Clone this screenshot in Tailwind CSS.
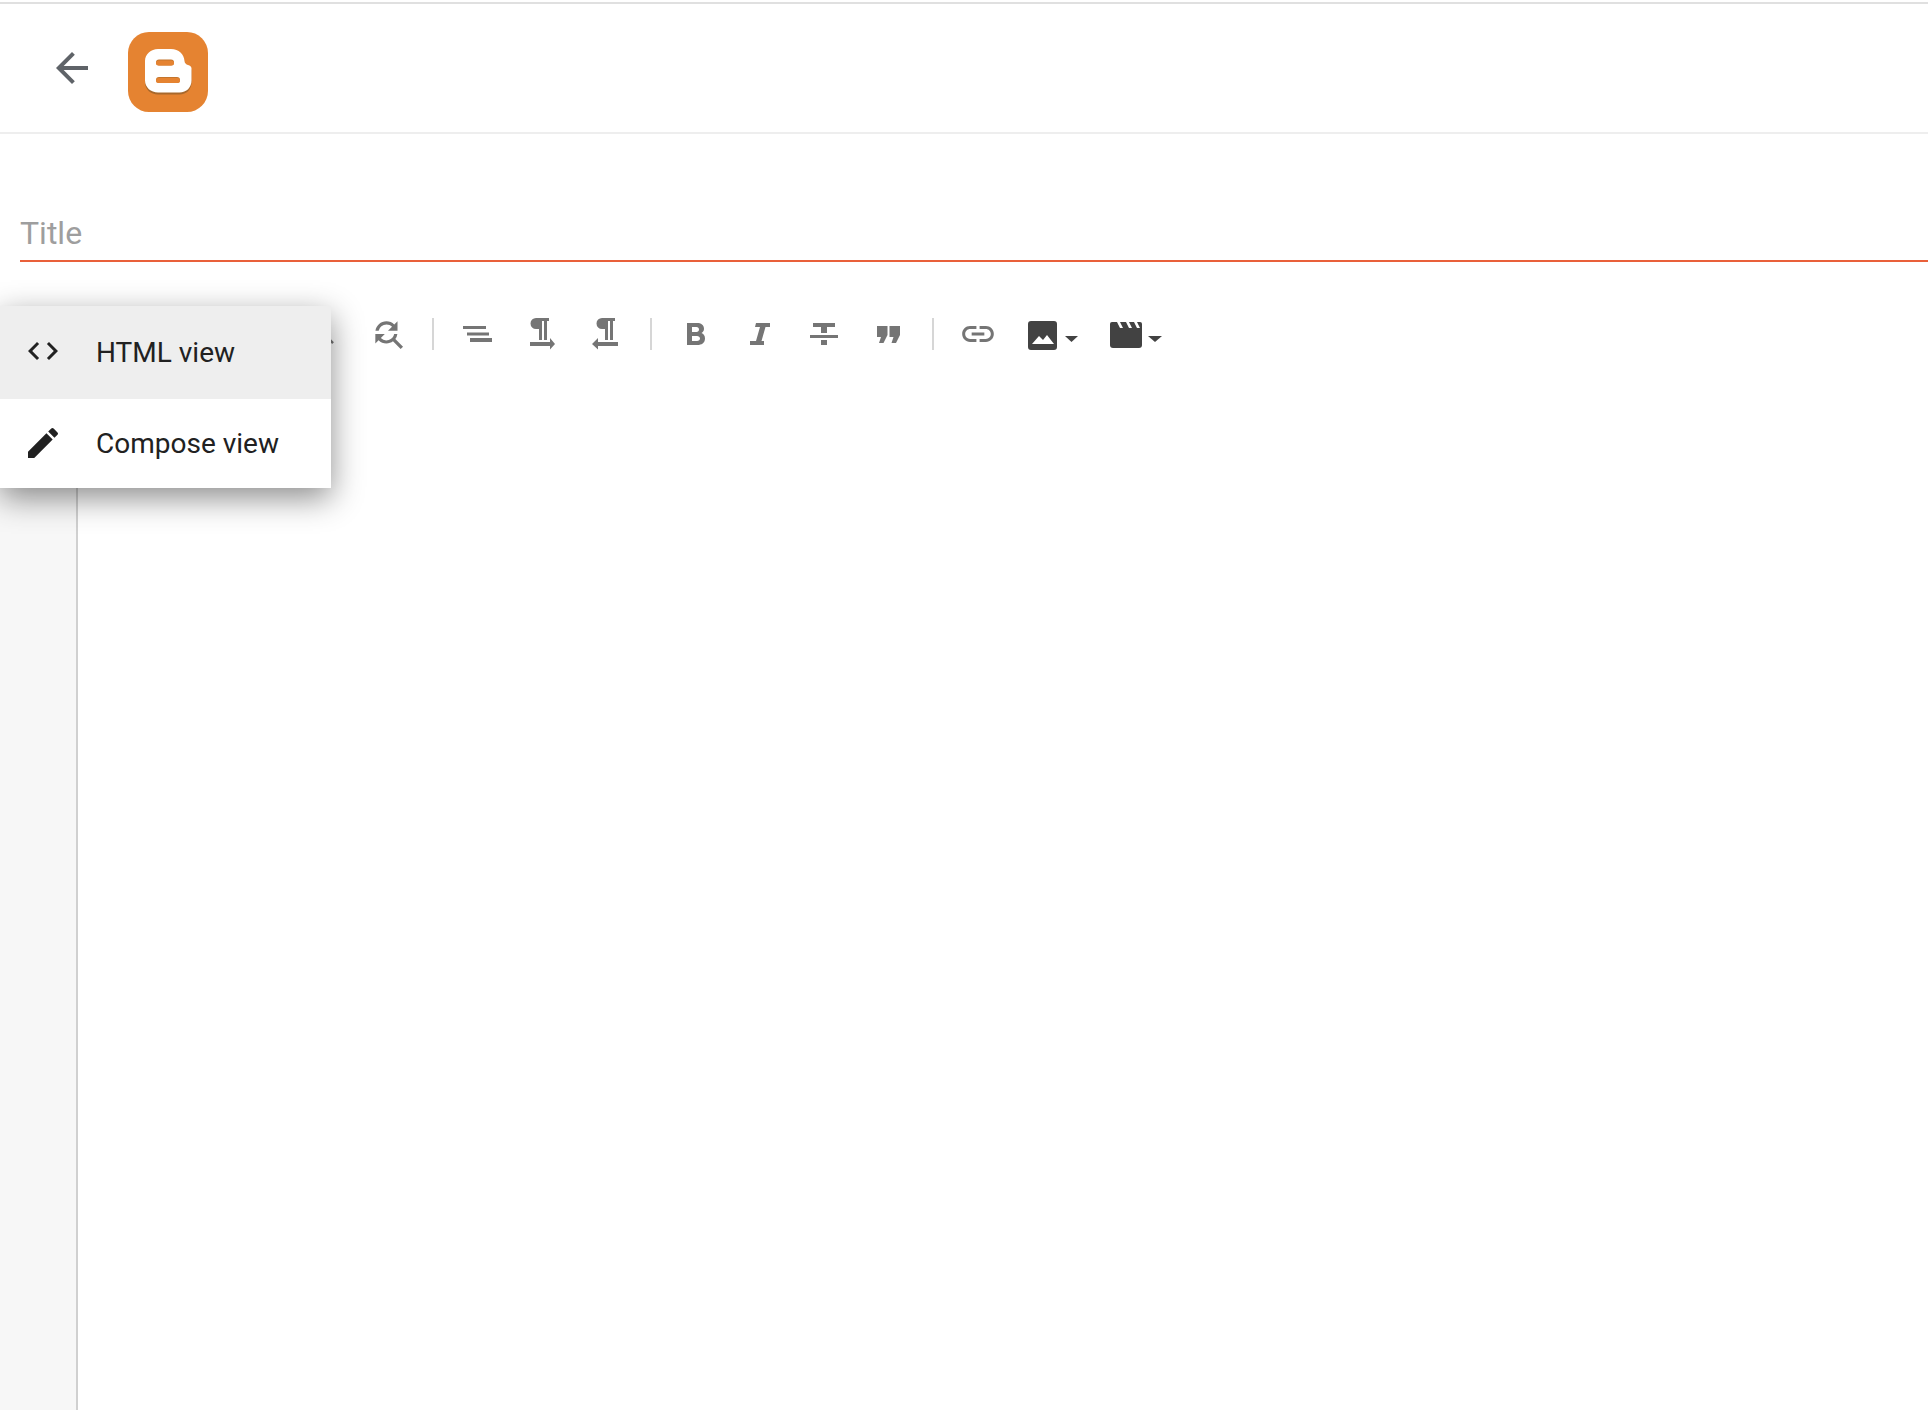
<!DOCTYPE html>
<html lang="en">
<head>
  <meta charset="UTF-8" />
  <title>Blogger editor</title>
  <script src="https://cdn.jsdelivr.net/npm/@tailwindcss/browser@4"></script>
</head>
<body class="bg-white font-['Roboto',sans-serif] h-[1410px] overflow-hidden relative">

  <!-- Header -->
  <header class="h-[134px] border-t-[3px] border-t-white relative border-b-2 border-b-[#eeeeee] flex items-center pl-[48px] pb-[2px]">
    <div class="absolute top-[-1px] left-0 right-0 h-[2px] bg-[#e0e0e0]"></div>
    <svg class="w-[48px] h-[48px] mt-[3px]" viewBox="0 0 24 24" fill="#5f6368"><path d="M20 11H7.830l5.590-5.590L12 4l-8 8 8 8 1.410-1.410L7.830 13H20v-2z"/></svg>
    <svg class="w-[80px] h-[80px] ml-[32px] mt-[11px]" viewBox="0 0 80 80">
      <rect width="80" height="80" rx="21" fill="#e58331"/>
      <path d="M30 18h13c8 0 13 5 13.500 12 .2 2 1.500 3.500 3.500 4 2 .4 3.500 1.500 3.500 3.500v12c0 7-5 12-12 12H30c-7 0-13-5-13-12V30c0-7 6-12 13-12z" fill="#a8682c" transform="translate(0 1)"/>
      <path d="M30 17h13c8 0 13 5 13.500 12 .2 2 1.500 3.500 3.500 4 2 .4 3.500 1.500 3.500 3.500v12c0 7-5 12-12 12H30c-7 0-13-5-13-12V29c0-7 6-12 13-12z" fill="#fff"/>
      <rect x="28" y="27.500" width="18" height="6" rx="3" fill="#c4752c"/>
      <rect x="28" y="28.500" width="18" height="5" rx="2.500" fill="#e58331"/>
      <rect x="28" y="45" width="24" height="6" rx="3" fill="#c4752c"/>
      <rect x="28" y="46" width="24" height="5" rx="2.500" fill="#e58331"/>
    </svg>
  </header>

  <!-- Title -->
  <div class="pl-[20px] mt-[72px]">
    <div class="h-[56px] border-b-2 border-[#e9603a] flex items-center text-[32px] text-[#9e9e9e]">Title</div>
  </div>

  <!-- Toolbar -->
  <div class="flex items-center h-[64px] mt-[40px] pl-[292px] text-[#757575]">
    <button class="w-[64px] h-[64px] flex items-center justify-center">
      <svg class="w-[28px] h-[28px]" viewBox="0 0 24 24" fill="currentColor"><path d="M15.500 14h-.790l-.280-.270A6.470 6.470 0 0 0 16 9.500 6.500 6.500 0 1 0 9.500 16c1.610 0 3.090-.590 4.230-1.570l.270.280v.790l5 4.990L20.490 19l-4.990-5zm-6 0C7.010 14 5 11.990 5 9.500S7.010 5 9.500 5 14 7.010 14 9.500 11.990 14 9.500 14z"/></svg>
    </button>
    <button class="w-[64px] h-[64px] flex items-center justify-center">
      <svg class="w-[38px] h-[38px]" viewBox="0 0 24 24" fill="currentColor"><path d="M11 6c1.380 0 2.630.560 3.540 1.460L12 10h6V4l-2.050 2.050A6.976 6.976 0 0 0 11 4c-3.530 0-6.430 2.610-6.920 6H6.100A5 5 0 0 1 11 6zm5.640 9.140A6.913 6.913 0 0 0 17.920 12H15.900a5 5 0 0 1-8.440 2.540L10 12H4v6l2.050-2.050A6.976 6.976 0 0 0 11 18c1.550 0 2.980-.510 4.140-1.360L20 21.490 21.490 20l-4.850-4.860z"/></svg>
    </button>
    <div class="w-[2px] h-[32px] bg-[#d6d6d6] mx-[12px]"></div>
    <button class="w-[64px] h-[64px] flex items-center justify-center">
      <svg class="w-[32px] h-[32px]" viewBox="0 0 32 32" fill="currentColor"><path d="M1 8h23v3H1zM5 14.500h22v3H5zM8 20h22v4H8z"/></svg>
    </button>
    <button class="w-[64px] h-[64px] flex items-center justify-center">
      <svg class="w-[32px] h-[32px]" viewBox="0 0 32 32" fill="currentColor"><path d="M10 0h13v3h-2v19h-3V3h-2v19h-3V11h-3a5.500 5.500 0 0 1 0-11zM4 24h20v-4l5 6-5 5.500V28H4z"/></svg>
    </button>
    <button class="w-[64px] h-[64px] flex items-center justify-center">
      <svg class="w-[32px] h-[32px]" viewBox="0 0 32 32" fill="currentColor"><path d="M12 0h13v3h-2v19h-3V3h-2v19h-3V11h-3a5.500 5.500 0 0 1 0-11zM28 24H8v-4l-6 6 6 5.500V28h20z"/></svg>
    </button>
    <div class="w-[2px] h-[32px] bg-[#d6d6d6] mx-[12px]"></div>
    <button class="w-[64px] h-[64px] flex items-center justify-center">
      <svg class="w-[18px] h-[22px]" viewBox="0 0 18 22" fill="currentColor" fill-rule="evenodd"><path d="M0 0h10c4 0 7 2 7 5.800 0 2-1 3.400-2.500 4.200C16.500 10.700 18 12.700 18 15.500c0 4.500-3.500 6.500-7.500 6.500H0zM5 4v5h4.500C11 9 12 8 12 6.500S11 4 9.500 4zM5 13v5h5c1.700 0 3-1 3-2.500S11.700 13 10 13z"/></svg>
    </button>
    <button class="w-[64px] h-[64px] flex items-center justify-center">
      <svg class="w-[20px] h-[22px]" viewBox="0 0 20 22" fill="currentColor"><path d="M6 0h14v4h-4.500l-4 14H14v4H0v-4h6l4-14H5z"/></svg>
    </button>
    <button class="w-[64px] h-[64px] flex items-center justify-center">
      <svg class="w-[28px] h-[22px]" viewBox="0 0 28 22" fill="currentColor"><path d="M3 0h22v4h-8v6h-6V4H3zM0 12h28v3H0zM11 17h6v5h-6z"/></svg>
    </button>
    <button class="w-[64px] h-[64px] flex items-center justify-center">
      <svg class="w-[23px] h-[17px] mt-[1px]" viewBox="0 0 23 17" fill="currentColor"><path d="M0 0h10.500v9l-4 8H2l2-6H0zM12.500 0H23v9l-4 8h-4.500l2-6h-4z"/></svg>
    </button>
    <div class="w-[2px] h-[32px] bg-[#d6d6d6] mx-[12px]"></div>
    <button class="w-[64px] h-[64px] flex items-center justify-center">
      <svg class="w-[38px] h-[38px]" viewBox="0 0 24 24" fill="currentColor"><path d="M3.900 12c0-1.710 1.390-3.100 3.100-3.100h4V7H7c-2.760 0-5 2.240-5 5s2.240 5 5 5h4v-1.900H7c-1.710 0-3.100-1.390-3.100-3.100zM8 13h8v-2H8v2zm9-6h-4v1.900h4c1.710 0 3.100 1.390 3.100 3.100s-1.390 3.100-3.100 3.100h-4V17h4c2.760 0 5-2.240 5-5s-2.240-5-5-5z"/></svg>
    </button>
    <button class="w-[84px] h-[64px] flex items-center pl-[18px] text-[#424242]">
      <svg class="w-[29px] h-[29px] mt-[3px]" viewBox="0 0 29 29" fill="currentColor"><path fill-rule="evenodd" d="M3 0h23a3 3 0 0 1 3 3v23a3 3 0 0 1-3 3H3a3 3 0 0 1-3-3V3a3 3 0 0 1 3-3zM4 23h22l-7-9-4 5-4-4z"/></svg>
      <svg class="w-[13px] h-[6px] ml-[8px] mt-[10px]" viewBox="0 0 13 6" fill="currentColor"><path d="M0 0h13L6.500 6z"/></svg>
    </button>
    <button class="w-[84px] h-[64px] flex items-center pl-[16px] text-[#424242]">
      <svg class="w-[32px] h-[26px] mt-[2px]" viewBox="0 0 32 26">
        <path d="M2 0h28a2 2 0 0 1 2 2v21a3 3 0 0 1-3 3H3a3 3 0 0 1-3-3V2a2 2 0 0 1 2-2z" fill="currentColor"/>
        <path d="M7 0h3l3 6h-3zM16 0h3l3 6h-3zM24 0h3l3 6h-3z" fill="#fff"/>
      </svg>
      <svg class="w-[14px] h-[6px] ml-[6px] mt-[10px]" viewBox="0 0 14 6" fill="currentColor"><path d="M0 0h14L7 6z"/></svg>
    </button>
  </div>

  <!-- Editor -->
  <div class="flex mt-[4px] h-[1100px]">
    <div class="w-[78px] bg-[#f7f7f7] border-r-2 border-[#d0d0d0]"></div>
    <div class="flex-1"></div>
  </div>

  <!-- View mode menu -->
  <div class="absolute left-0 top-[306px] w-[331px] bg-white shadow-[0_10px_30px_rgba(0,0,0,0.45)] text-[28px] text-[#212121]">
    <div class="h-[93px] bg-[#eeeeee] flex items-center">
      <svg class="w-[36px] h-[36px] ml-[25px] mt-[-4px]" viewBox="0 0 24 24" fill="currentColor"><path d="M9.400 16.600 4.800 12l4.600-4.600L8 6l-6 6 6 6 1.400-1.400zm5.200 0 4.600-4.600-4.600-4.600L16 6l6 6-6 6-1.400-1.400z"/></svg>
      <span class="ml-[35px]">HTML view</span>
    </div>
    <div class="h-[89px] flex items-center">
      <svg class="w-[40px] h-[40px] ml-[23px] mt-[-2px]" viewBox="0 0 24 24" fill="currentColor"><path d="M3 17.250V21h3.750L17.810 9.940l-3.750-3.750L3 17.250zM20.710 7.040a.996.996 0 0 0 0-1.410l-2.340-2.340a.996.996 0 0 0-1.410 0l-1.830 1.830 3.750 3.750 1.830-1.830z"/></svg>
      <span class="ml-[33px]">Compose view</span>
    </div>
  </div>
</body>
</html>
